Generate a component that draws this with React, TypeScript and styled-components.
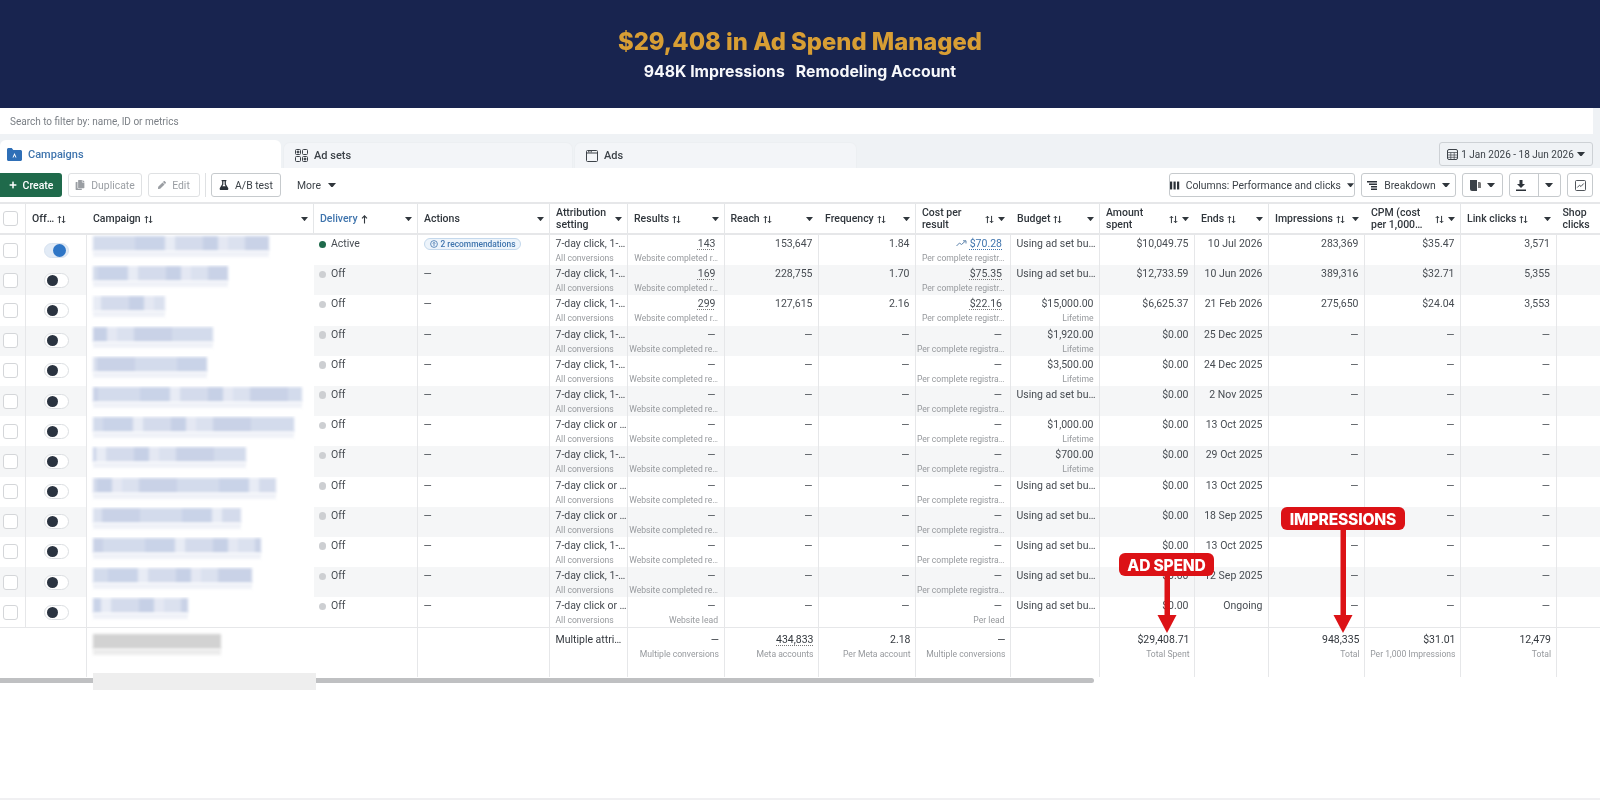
import React from "react";
import styled, { createGlobalStyle } from "styled-components";
import { FaCopy, FaFlask, FaPen, FaPlus } from "react-icons/fa";

//== Styling ==//
const GlobalStyle = createGlobalStyle`
  html, body { margin: 0; padding: 0; background: #fff; }
  body { font-family: "Roboto", "Liberation Sans", sans-serif; color: #3c4248; }
  * { box-sizing: border-box; }
`;

const columns =
  "26px 61px 227px 104px 132px 78px 96.5px 94.5px 97px 95px 89px 95px 74px 96px 96px 95.5px 43.5px";

const Page = styled.div`
  position: relative;
  width: 1600px;
  height: 800px;
  overflow: hidden;
  display: flex;
  flex-direction: column;
  background: #fff;
  filter: blur(0.3px);
`;

const Banner = styled.header`
  height: 108px;
  background: #18244f;
  display: flex;
  flex-direction: column;
  align-items: center;
  padding-top: 26px;
  font-family: "Inter", "Liberation Sans", sans-serif;
`;

const Title = styled.h1`
  margin: 0;
  font-size: 23.8px;
  line-height: 32px;
  font-weight: 800;
  color: #d89e34;
`;

const Subtitle = styled.div`
  display: flex;
  gap: 11px;
  margin-top: 4px;
  font-size: 15.8px;
  line-height: 20px;
  font-weight: 700;
  color: #f7f8fb;
`;

const SearchStrip = styled.div`
  height: 26px;
  padding-right: 7px;
  background: #eff2f5;
`;

const SearchBox = styled.div`
  height: 100%;
  padding-left: 10px;
  display: flex;
  align-items: center;
  background: #fff;
  font-size: 10px;
  color: #7a7f85;
`;

const TabBar = styled.div`
  height: 34px;
  padding: 6px 7px 0 0;
  display: flex;
  align-items: flex-start;
  background: #eff2f5;
`;

const Tab = styled.div<{ $active?: boolean; $width: number }>`
  width: ${(p) => p.$width}px;
  height: ${(p) => (p.$active ? 28 : 25)}px;
  margin-top: ${(p) => (p.$active ? 0 : 3)}px;
  margin-right: 3px;
  padding-left: ${(p) => (p.$active ? 7 : 11)}px;
  display: flex;
  align-items: center;
  gap: 6px;
  border-radius: 6px 6px 0 0;
  background: ${(p) => (p.$active ? "#fff" : "#f3f5f8")};
  box-shadow: ${(p) => (p.$active ? "none" : "0 0 0 1px #eceff2")};
  font-size: 11px;
  font-weight: 500;
  color: ${(p) => (p.$active ? "#3f74ad" : "#3c4248")};
`;

const DateButton = styled.div`
  margin-left: auto;
  margin-top: 2px;
  width: 154px;
  height: 24px;
  padding: 0 7px;
  display: flex;
  align-items: center;
  justify-content: space-between;
  border: 1px solid #cdd1d5;
  border-radius: 3px;
  font-size: 10px;
  white-space: nowrap;
  color: #3c4248;
`;

const Toolbar = styled.div`
  height: 34px;
  padding: 5px 7px 5px 0;
  display: flex;
  align-items: stretch;
  gap: 6px;
  background: #fff;
`;

const Create = styled.div`
  width: 62px;
  display: flex;
  align-items: center;
  justify-content: center;
  gap: 6px;
  border-radius: 0 3px 3px 0;
  background: #1f6a4b;
  color: #fff;
  font-size: 10.5px;
  font-weight: 500;
`;

const ToolButton = styled.div<{ $width: number; $muted?: boolean }>`
  width: ${(p) => p.$width}px;
  display: flex;
  align-items: center;
  justify-content: center;
  gap: 6px;
  border: 1px solid ${(p) => (p.$muted ? "#dfe1e3" : "#c6cacd")};
  border-radius: 3px;
  font-size: 10.4px;
  white-space: nowrap;
  color: ${(p) => (p.$muted ? "#9a9ea3" : "#3c4248")};
`;

const Divider = styled.div`
  width: 1px;
  margin: 0 -1px;
  background: #dfe1e3;
`;

const MoreButton = styled.div`
  margin-left: 10px;
  display: flex;
  align-items: center;
  gap: 7px;
  font-size: 10.4px;
  color: #3c4248;
`;

const Spacer = styled.div`
  flex: 1;
`;

const SplitSection = styled.div<{ $border?: boolean }>`
  flex: 1;
  height: 100%;
  display: flex;
  align-items: center;
  justify-content: center;
  border-left: ${(p) => (p.$border ? "1px solid #c6cacd" : "0")};
`;

const Table = styled.div`
  border-top: 2px solid #e6e7e9;
`;

const HeaderRow = styled.div`
  height: 31px;
  display: grid;
  grid-template-columns: ${columns};
  border-bottom: 2px solid #e6e7e9;
`;

const HeadCell = styled.div<{ $sep?: boolean; $blue?: boolean }>`
  padding: 1px 5px 0 6px;
  display: flex;
  align-items: center;
  gap: 3px;
  min-width: 0;
  border-right: ${(p) => (p.$sep ? "1px solid #e4e6e8" : "1px solid transparent")};
  font-size: 10.5px;
  line-height: 12.5px;
  font-weight: 500;
  color: ${(p) => (p.$blue ? "#3f74ad" : "#30363c")};
  white-space: nowrap;
`;

const HeadTail = styled.span`
  margin-left: auto;
  display: flex;
  align-items: center;
  gap: 4px;
`;

const HeadLabel = styled.span`
  white-space: pre-line;
`;

const Row = styled.div<{ $shaded: boolean }>`
  height: 30.2px;
  display: grid;
  grid-template-columns: ${columns};
  background: ${(p) => (p.$shaded ? "#f5f6f7" : "#fff")};
`;

const TotalRow = styled.div`
  height: 50px;
  display: grid;
  grid-template-columns: ${columns};
  border-top: 1px solid #e6e7e9;
`;

const Cell = styled.div<{ $right?: boolean; $sep?: boolean }>`
  position: relative;
  min-width: 0;
  padding: 2px 5.5px 0 5.5px;
  display: flex;
  flex-direction: column;
  align-items: ${(p) => (p.$right ? "flex-end" : "flex-start")};
  border-right: ${(p) => (p.$sep === false ? "1px solid transparent" : "1px solid #e6e7e9")};
  overflow: hidden;
  white-space: nowrap;
`;

const TotalCell = styled(Cell)`
  padding-top: 5px;
  padding-right: 4.5px;
`;

const Main = styled.div<{ $dark?: boolean; $inset?: boolean }>`
  margin-right: ${(p) => (p.$inset ? 2.5 : 0)}px;
  font-size: 10.5px;
  line-height: 14px;
  color: ${(p) => (p.$dark ? "#33383e" : "#474c52")};
`;

const Sub = styled.div`
  font-size: 8.6px;
  line-height: 13px;
  margin-top: 1px;
  color: #96999d;
`;

const Metric = styled.span`
  text-decoration: underline dotted #777;
  text-underline-offset: 2px;
`;

const CostLink = styled.span`
  display: inline-flex;
  align-items: center;
  gap: 3px;
  color: #3f74ad;
  text-decoration: underline dotted #3f74ad;
  text-underline-offset: 2px;
`;

const CheckCell = styled.div`
  padding: 0 0 0 2.5px;
  display: flex;
  align-items: center;
  border-right: 1px solid #e6e7e9;
`;

const Checkbox = styled.div`
  width: 15px;
  height: 15px;
  border: 1px solid #d4d6d9;
  border-radius: 3px;
  background: #fff;
`;

const ToggleCell = styled.div`
  display: flex;
  align-items: center;
  justify-content: center;
  border-right: 1px solid #e6e7e9;
`;

const Toggle = styled.div<{ $on?: boolean }>`
  width: 25px;
  height: 15px;
  padding: 1px 2px;
  display: flex;
  align-items: center;
  justify-content: ${(p) => (p.$on ? "flex-end" : "flex-start")};
  border: 1px solid ${(p) => (p.$on ? "#d8e3f0" : "#dcdfe2")};
  border-radius: 8px;
  background: ${(p) => (p.$on ? "#e2ebf6" : "#fff")};
`;

const Knob = styled.div<{ $on?: boolean }>`
  width: ${(p) => (p.$on ? 13 : 11)}px;
  height: ${(p) => (p.$on ? 13 : 11)}px;
  border-radius: 50%;
  background: ${(p) => (p.$on ? "#2f76c6" : "#2a3340")};
`;

const BlurCell = styled.div`
  position: relative;
  background: #fff;
  overflow: hidden;
  padding: 1px 0 0 6px;
`;

const BlurName = styled.div<{ $gray?: boolean }>`
  height: 15px;
  filter: blur(1.4px);
  background: ${(p) =>
    p.$gray
      ? "linear-gradient(90deg,#d2d2d2 0 92%,#b6b6b6 92% 100%)"
      : "linear-gradient(90deg,#d3dbec 0 22%,#c9d3e8 22% 38%,#e8ecf5 38% 43%,#d4dbec 43% 58%,#c6d0e6 58% 66%,#e4e8f3 66% 71%,#dbe1ef 71% 80%,#c9d2e7 80% 100%)"};
  background-size: 190px 100%;
`;

const BlurShade = styled.div<{ $gray?: boolean }>`
  height: 6px;
  filter: blur(1.6px);
  background: ${(p) => (p.$gray ? "#ececec" : "#f0f2f8")};
`;

const StatusCell = styled(Cell)`
  flex-direction: row;
  align-items: flex-start;
  gap: 5px;
  padding-left: 4.5px;
`;

const Dot = styled.span<{ $on?: boolean }>`
  flex: none;
  width: 7.5px;
  height: 7.5px;
  margin-top: 3.5px;
  border-radius: 50%;
  background: ${(p) => (p.$on ? "#1f6a4b" : "#cdcfd2")};
`;

const Recommend = styled.span`
  display: inline-flex;
  align-items: center;
  gap: 3px;
  height: 12px;
  margin-top: 1px;
  padding: 0 5px;
  border: 1px solid #c4d8ec;
  border-radius: 7px;
  background: #edf4fb;
  font-size: 8.4px;
  font-weight: 500;
  color: #3f74ad;
`;

const ScrollTrack = styled.div`
  width: 1094px;
  height: 5px;
  margin-top: 1px;
  border-radius: 0 3px 3px 0;
  background: #bfc0c2;
`;

const BottomStrip = styled.div`
  height: 2px;
  background: #f0f0f2;
`;

const WashedBar = styled.div`
  position: absolute;
  left: 93px;
  top: 673px;
  width: 223px;
  height: 17px;
  background: #eeeeee;
`;

const Callout = styled.div<{ $left: number; $top: number; $width: number }>`
  position: absolute;
  left: ${(p) => p.$left}px;
  top: ${(p) => p.$top}px;
  width: ${(p) => p.$width}px;
  height: 23px;
  padding-top: 1px;
  display: flex;
  align-items: center;
  justify-content: center;
  border-radius: 6px;
  background: #dc1216;
  color: #fff;
  font-family: "Inter", "Liberation Sans", sans-serif;
  font-size: 15.6px;
  font-weight: 800;
  letter-spacing: -0.2px;
`;

const Arrow = styled.svg<{ $left: number; $top: number; $height: number }>`
  position: absolute;
  left: ${(p) => p.$left}px;
  top: ${(p) => p.$top}px;
  width: 20px;
  height: ${(p) => p.$height}px;
`;

//== Icons ==//
const Caret = ({ color = "#30363c", w = 7 }: { color?: string; w?: number }) => (
  <svg width={w} height={w * 0.6} viewBox="0 0 10 6">
    <path d="M0 0h10L5 6z" fill={color} />
  </svg>
);

const Sort = () => (
  <svg width="9" height="9" viewBox="0 0 10 9" fill="none" stroke="#30363c" strokeWidth="1.1">
    <path d="M2.7 8.5V1M.8 2.8 2.7.9l1.9 1.9" />
    <path d="M7.3.5V8M5.4 6.2l1.9 1.9 1.9-1.9" />
  </svg>
);

const SortUp = () => (
  <svg width="7" height="9" viewBox="0 0 7 9" fill="none" stroke="#30363c" strokeWidth="1.1">
    <path d="M3.5 8.5V1M1 3.4 3.5.9 6 3.4" />
  </svg>
);

const FolderIcon = () => (
  <svg width="15" height="13" viewBox="0 0 15 13">
    <path d="M0 1.5C0 .7.7 0 1.5 0h3.2l1.6 2h7.2c.8 0 1.5.7 1.5 1.5v8c0 .8-.7 1.5-1.5 1.5h-12C.7 13 0 12.3 0 11.5z" fill="#2f6fb7" />
    <path d="M7.5 5 9.5 9.5H8.500L7.5 7.2 6.5 9.5H5.500z" fill="#fff" />
  </svg>
);

const AdSetsIcon = () => (
  <svg width="13" height="13" viewBox="0 0 13 13" fill="none" stroke="#3c4248" strokeWidth="1">
    <rect x=".5" y=".5" width="5" height="5" rx="1" />
    <rect x="7.5" y=".5" width="5" height="5" rx="1" />
    <rect x=".5" y="7.5" width="5" height="5" rx="1" />
    <rect x="7.5" y="7.5" width="5" height="5" rx="1" />
    <circle cx="3" cy="3" r="1" fill="#3c4248" />
    <circle cx="10" cy="10" r="1" fill="#3c4248" />
  </svg>
);

const AdsIcon = () => (
  <svg width="12" height="12" viewBox="0 0 12 12" fill="none" stroke="#3c4248" strokeWidth="1">
    <rect x=".5" y=".5" width="11" height="11" rx="1" />
    <path d="M.5 3h11M2 1.8h1.5M4.5 1.8H6" />
  </svg>
);

const CalendarIcon = () => (
  <svg width="11" height="11" viewBox="0 0 11 11" fill="none" stroke="#3c4248" strokeWidth="1">
    <rect x=".5" y=".5" width="10" height="10" rx="1.5" />
    <path d="M.5 3.5h10M.5 6h10M.5 8.3h10M3.8 3.5v7M7.2 3.5v7" strokeWidth=".7" />
  </svg>
);

const ColumnsIcon = () => (
  <svg width="11" height="9" viewBox="0 0 11 9" fill="#2b3138">
    <rect width="2.5" height="9" />
    <rect x="4" width="2.5" height="9" />
    <rect x="8" width="2.5" height="9" />
  </svg>
);

const BreakdownIcon = () => (
  <svg width="11" height="9" viewBox="0 0 11 9" fill="#2b3138">
    <rect width="10" height="1.5" />
    <rect x="2" y="2.5" width="8" height="1.5" />
    <rect x="4" y="5" width="6" height="1.5" />
    <rect x="4" y="7.5" width="6" height="1.5" />
  </svg>
);

const ReportIcon = () => (
  <svg width="11" height="11" viewBox="0 0 11 11" fill="#3c4248">
    <path d="M0 0h7v11H2a2 2 0 0 1-2-2z" />
    <path d="M8 2h1.5c.8 0 1.5.7 1.5 1.5V8H8z" fill="#777" />
  </svg>
);

const DownloadIcon = () => (
  <svg width="10" height="11" viewBox="0 0 10 11" fill="#2b3138">
    <path d="M3.5 0h3v4H9L5 8 1 4h2.5z" />
    <rect y="9.5" width="10" height="1.5" />
  </svg>
);

const ChartIcon = () => (
  <svg width="11" height="11" viewBox="0 0 11 11" fill="none" stroke="#3c4248" strokeWidth=".9">
    <rect x=".5" y=".5" width="10" height="10" rx="1" />
    <path d="M2.3 7.5 4.5 5.2l1.5 1.3 2.7-3" />
  </svg>
);

const TrendIcon = () => (
  <svg width="11" height="7" viewBox="0 0 11 7" fill="none" stroke="#5d83ac" strokeWidth="1">
    <path d="M.5 6 3.5 3l2 1.5L9.5 1M7 .8h3v2.700" />
  </svg>
);

const BulbIcon = () => (
  <svg width="8" height="8" viewBox="0 0 8 8" fill="none" stroke="#3f74ad" strokeWidth=".8">
    <circle cx="4" cy="4" r="3.4" />
    <path d="M4 6V2.5M2.8 3.5 4 2.3l1.2 1.2" />
  </svg>
);

const DownArrow = ({ height }: { height: number }) => (
  <svg viewBox={`0 0 20 ${height}`} width="20" height={height}>
    <rect x="7.5" width="5.5" height={height - 17} fill="#dc1216" />
    <path d={`M0.5 ${height - 18}H19.5L10 ${height}z`} fill="#dc1216" />
  </svg>
);

//== Data ==//
type CampaignRow = {
  name: number;
  on?: boolean;
  attr: string;
  results: string;
  resultsSub: string;
  reach: string;
  freq: string;
  cost: string;
  costSub: string;
  budget: string;
  spent: string;
  ends: string;
  impressions: string;
  cpm: string;
  clicks: string;
};

const SHORT = "7-day click, 1-…";
const LONG = "7-day click or …";
const USING = "Using ad set bu…";
const WCR = "Website completed re…";
const PCR = "Per complete registra…";

const empty = (
  name: number,
  attr: string,
  budget: string,
  ends: string,
  results = WCR,
  cost = PCR
): CampaignRow => ({
  name,
  attr,
  results: "—",
  resultsSub: results,
  reach: "—",
  freq: "—",
  cost: "—",
  costSub: cost,
  budget,
  spent: "$0.00",
  ends,
  impressions: "—",
  cpm: "—",
  clicks: "—",
});

const rows: CampaignRow[] = [
  {
    name: 176,
    on: true,
    attr: SHORT,
    results: "143",
    resultsSub: "Website completed r…",
    reach: "153,647",
    freq: "1.84",
    cost: "$70.28",
    costSub: "Per complete registr…",
    budget: USING,
    spent: "$10,049.75",
    ends: "10 Jul 2026",
    impressions: "283,369",
    cpm: "$35.47",
    clicks: "3,571",
  },
  {
    name: 135,
    attr: SHORT,
    results: "169",
    resultsSub: "Website completed r…",
    reach: "228,755",
    freq: "1.70",
    cost: "$75.35",
    costSub: "Per complete registr…",
    budget: USING,
    spent: "$12,733.59",
    ends: "10 Jun 2026",
    impressions: "389,316",
    cpm: "$32.71",
    clicks: "5,355",
  },
  {
    name: 72,
    attr: SHORT,
    results: "299",
    resultsSub: "Website completed r…",
    reach: "127,615",
    freq: "2.16",
    cost: "$22.16",
    costSub: "Per complete registr…",
    budget: "$15,000.00",
    spent: "$6,625.37",
    ends: "21 Feb 2026",
    impressions: "275,650",
    cpm: "$24.04",
    clicks: "3,553",
  },
  empty(120, SHORT, "$1,920.00", "25 Dec 2025"),
  empty(114, SHORT, "$3,500.00", "24 Dec 2025"),
  empty(209, SHORT, USING, "2 Nov 2025"),
  empty(201, LONG, "$1,000.00", "13 Oct 2025"),
  empty(153, SHORT, "$700.00", "29 Oct 2025"),
  empty(183, LONG, USING, "13 Oct 2025"),
  empty(148, LONG, USING, "18 Sep 2025"),
  empty(168, SHORT, USING, "13 Oct 2025"),
  empty(159, SHORT, USING, "12 Sep 2025"),
  empty(95, LONG, USING, "Ongoing", "Website lead", "Per lead"),
];

const heads: { label: string; sort?: boolean; caret?: boolean; sep?: boolean; tailSort?: boolean }[] = [
  { label: "Attribution\nsetting", caret: true, sep: true },
  { label: "Results", sort: true, caret: true, sep: true },
  { label: "Reach", sort: true, caret: true },
  { label: "Frequency", sort: true, caret: true, sep: true },
  { label: "Cost per\nresult", tailSort: true, caret: true },
  { label: "Budget", sort: true, caret: true, sep: true },
  { label: "Amount\nspent", tailSort: true, caret: true },
  { label: "Ends", sort: true, caret: true, sep: true },
  { label: "Impressions", sort: true, caret: true },
  { label: "CPM (cost\nper 1,000…", tailSort: true, caret: true, sep: true },
  { label: "Link clicks", sort: true, caret: true },
  { label: "Shop\nclicks" },
];

//== Component ==//
const App: React.FC = () => {
  return (
    <Page>
      <GlobalStyle />
      <Banner>
        <Title>$29,408 in Ad Spend Managed</Title>
        <Subtitle>
          <span>948K Impressions</span>
          <span>Remodeling Account</span>
        </Subtitle>
      </Banner>

      <SearchStrip>
        <SearchBox>Search to filter by: name, ID or metrics</SearchBox>
      </SearchStrip>

      <TabBar>
        <Tab $active $width={281}>
          <FolderIcon /> Campaigns
        </Tab>
        <Tab $width={288}>
          <AdSetsIcon /> Ad sets
        </Tab>
        <Tab $width={281}>
          <AdsIcon /> Ads
        </Tab>
        <DateButton>
          <CalendarIcon />
          <span>1 Jan 2026 - 18 Jun 2026</span>
          <Caret w={8} />
        </DateButton>
      </TabBar>

      <Toolbar>
        <Create>
          <FaPlus size={8} /> Create
        </Create>
        <ToolButton $muted $width={74}>
          <FaCopy size={10} /> Duplicate
        </ToolButton>
        <ToolButton $muted $width={52}>
          <FaPen size={8} /> Edit
        </ToolButton>
        <Divider />
        <ToolButton $width={70}>
          <FaFlask size={10} color="#2b3138" /> A/B test
        </ToolButton>
        <MoreButton>
          More <Caret w={8} />
        </MoreButton>
        <Spacer />
        <ToolButton $width={186}>
          <ColumnsIcon /> Columns: Performance and clicks <Caret w={8} />
        </ToolButton>
        <ToolButton $width={95}>
          <BreakdownIcon /> Breakdown <Caret w={8} />
        </ToolButton>
        <ToolButton $width={41}>
          <ReportIcon /> <Caret w={8} />
        </ToolButton>
        <ToolButton $width={52}>
          <SplitSection>
            <DownloadIcon />
          </SplitSection>
          <SplitSection $border>
            <Caret w={8} />
          </SplitSection>
        </ToolButton>
        <ToolButton $width={26}>
          <ChartIcon />
        </ToolButton>
      </Toolbar>

      <Table>
        <HeaderRow>
          <CheckCell>
            <Checkbox />
          </CheckCell>
          <HeadCell>
            Off… <Sort />
          </HeadCell>
          <HeadCell $sep>
            Campaign <Sort />
            <HeadTail>
              <Caret />
            </HeadTail>
          </HeadCell>
          <HeadCell $sep $blue>
            Delivery <SortUp />
            <HeadTail>
              <Caret />
            </HeadTail>
          </HeadCell>
          <HeadCell $sep>
            Actions
            <HeadTail>
              <Caret />
            </HeadTail>
          </HeadCell>
          {heads.map((h, i) => (
            <HeadCell key={i} $sep={h.sep}>
              <HeadLabel>{h.label}</HeadLabel>
              {h.sort && <Sort />}
              {(h.caret || h.tailSort) && (
                <HeadTail>
                  {h.tailSort && <Sort />}
                  {h.caret && <Caret />}
                </HeadTail>
              )}
            </HeadCell>
          ))}
        </HeaderRow>

        {rows.map((r, i) => (
          <Row key={i} $shaded={i % 2 === 1}>
            <CheckCell>
              <Checkbox />
            </CheckCell>
            <ToggleCell>
              <Toggle $on={r.on}>
                <Knob $on={r.on} />
              </Toggle>
            </ToggleCell>
            <BlurCell>
              <BlurName style={{ width: r.name, backgroundPositionX: -i * 37 }} />
              <BlurShade style={{ width: r.name }} />
            </BlurCell>
            <StatusCell>
              <Dot $on={r.on} />
              <Main>{r.on ? "Active" : "Off"}</Main>
            </StatusCell>
            <Cell>
              {r.on ? (
                <Recommend>
                  <BulbIcon /> 2 recommendations
                </Recommend>
              ) : (
                <Main>—</Main>
              )}
            </Cell>
            <Cell>
              <Main>{r.attr}</Main>
              <Sub>All conversions</Sub>
            </Cell>
            <Cell $right>
              <Main $inset>{r.results === "—" ? "—" : <Metric>{r.results}</Metric>}</Main>
              <Sub>{r.resultsSub}</Sub>
            </Cell>
            <Cell $right>
              <Main>{r.reach}</Main>
            </Cell>
            <Cell $right>
              <Main>{r.freq}</Main>
            </Cell>
            <Cell $right>
              <Main $inset>
                {r.cost === "—" ? (
                  "—"
                ) : i === 0 ? (
                  <>
                    <TrendIcon /> <CostLink>{r.cost}</CostLink>
                  </>
                ) : (
                  <Metric>{r.cost}</Metric>
                )}
              </Main>
              <Sub>{r.costSub}</Sub>
            </Cell>
            <Cell $right={r.budget !== USING}>
              <Main>{r.budget}</Main>
              {r.budget !== USING && <Sub>Lifetime</Sub>}
            </Cell>
            <Cell $right>
              <Main>{r.spent}</Main>
            </Cell>
            <Cell $right>
              <Main>{r.ends}</Main>
            </Cell>
            <Cell $right>
              <Main>{r.impressions}</Main>
            </Cell>
            <Cell $right>
              <Main>{r.cpm}</Main>
            </Cell>
            <Cell $right>
              <Main>{r.clicks}</Main>
            </Cell>
            <Cell $sep={false} />
          </Row>
        ))}

        <TotalRow>
          <TotalCell $sep={false} />
          <TotalCell />
          <BlurCell>
            <BlurName $gray style={{ width: 128, marginTop: 5 }} />
            <BlurShade $gray style={{ width: 128 }} />
          </BlurCell>
          <TotalCell />
          <TotalCell />
          <TotalCell>
            <Main $dark>Multiple attri…</Main>
          </TotalCell>
          <TotalCell $right>
            <Main $dark>—</Main>
            <Sub>Multiple conversions</Sub>
          </TotalCell>
          <TotalCell $right>
            <Main $dark>
              <Metric>434,833</Metric>
            </Main>
            <Sub>Meta accounts</Sub>
          </TotalCell>
          <TotalCell $right>
            <Main $dark>2.18</Main>
            <Sub>Per Meta account</Sub>
          </TotalCell>
          <TotalCell $right>
            <Main $dark>—</Main>
            <Sub>Multiple conversions</Sub>
          </TotalCell>
          <TotalCell />
          <TotalCell $right>
            <Main $dark>$29,408.71</Main>
            <Sub>Total Spent</Sub>
          </TotalCell>
          <TotalCell />
          <TotalCell $right>
            <Main $dark>948,335</Main>
            <Sub>Total</Sub>
          </TotalCell>
          <TotalCell $right>
            <Main $dark>$31.01</Main>
            <Sub>Per 1,000 Impressions</Sub>
          </TotalCell>
          <TotalCell $right>
            <Main $dark>12,479</Main>
            <Sub>Total</Sub>
          </TotalCell>
          <TotalCell $sep={false} />
        </TotalRow>
      </Table>

      <ScrollTrack />
      <Spacer />
      <BottomStrip />

      <WashedBar />

      <Arrow $left={1157} $top={576} $height={57}>
        <DownArrow height={57} />
      </Arrow>
      <Callout $left={1119} $top={553} $width={95}>
        AD SPEND
      </Callout>
      <Arrow $left={1333} $top={530} $height={103}>
        <DownArrow height={103} />
      </Arrow>
      <Callout $left={1281} $top={507} $width={124}>
        IMPRESSIONS
      </Callout>
    </Page>
  );
};

export default App;
